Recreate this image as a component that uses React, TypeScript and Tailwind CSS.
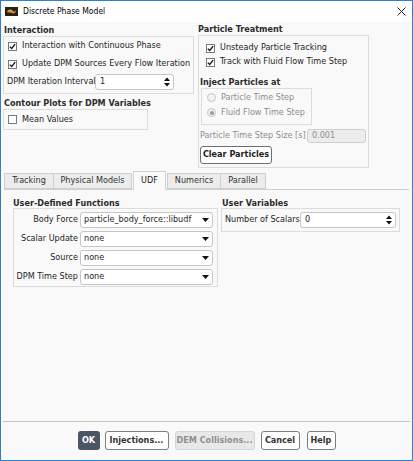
import type { ReactNode } from "react";

const font = "font-['DejaVu_Sans_Condensed','Liberation_Sans',sans-serif]";

function CheckBox({ checked }: { checked?: boolean }) {
  return (
    <span className="w-[9px] h-[9px] border border-[#7a7a7a] bg-white flex items-center justify-center shrink-0">
      {checked && (
        <svg width="7" height="7" viewBox="0 0 7 7">
          <path d="M0.8 3.6 L2.7 5.5 L6.2 1.2" stroke="#111" strokeWidth="1.3" fill="none" />
        </svg>
      )}
    </span>
  );
}

function Radio({ selected }: { selected?: boolean }) {
  return (
    <span className="w-[9px] h-[9px] rounded-full border border-[#c4c4c4] bg-[#f2f2f2] flex items-center justify-center shrink-0">
      {selected && <span className="w-[4px] h-[4px] rounded-full bg-[#9a9a9a]" />}
    </span>
  );
}

function CheckRow({ label, checked, className }: { label: string; checked?: boolean; className: string }) {
  return (
    <div className={`flex items-center gap-[5px] ${className}`}>
      <CheckBox checked={checked} />
      <span>{label}</span>
    </div>
  );
}

function Spinner({ value, className }: { value: string; className: string }) {
  return (
    <div className={`h-[16px] bg-white border border-[#c6c6c6] rounded-[3px] flex items-center pl-[4px] pr-[3px] ${className}`}>
      <span className="flex-1">{value}</span>
      <svg width="6" height="10" viewBox="0 0 6 10">
        <path d="M0 4 L3 0.6 L6 4 Z M0 6 L3 9.4 L6 6 Z" fill="#111" />
      </svg>
    </div>
  );
}

function Dropdown({ value }: { value: string }) {
  return (
    <div className="h-[16px] w-[133px] bg-white border border-[#c6c6c6] rounded-[3px] flex items-center pl-[3px] pr-[3px]">
      <span className="flex-1">{value}</span>
      <svg width="7" height="4" viewBox="0 0 7 4">
        <path d="M0 0 L7 0 L3.5 4 Z" fill="#111" />
      </svg>
    </div>
  );
}

function Header({ children, className }: { children: ReactNode; className: string }) {
  return <div className={`font-bold text-[#2b2b2b] ${className}`}>{children}</div>;
}

function Tab({ label, active, className }: { label: string; active?: boolean; className: string }) {
  return (
    <div
      className={`flex items-center justify-center border border-[#cfcfcf] ${
        active ? "h-[19px] -mb-px border-b-0 bg-[#fafafa] text-[#1a1a1a]" : "h-[16px] bg-[#ececec] text-[#333]"
      } ${className}`}
    >
      {label}
    </div>
  );
}

function UdfRow({ label, value }: { label: string; value: string }) {
  return (
    <div className="flex items-center h-[16px]">
      <span className="w-[64px] text-right whitespace-nowrap">{label}</span>
      <span className="ml-[2px]">
        <Dropdown value={value} />
      </span>
    </div>
  );
}

export default function App() {
  return (
    <div className={`w-[413px] h-[461px] border border-[#2d7fd5] bg-[#f9f9f9] flex flex-col text-[9px] text-[#1e1e1e] ${font}`}>
      {/* Title bar */}
      <div className="h-[21px] bg-white flex items-center shrink-0">
        <svg className="ml-[4px]" width="13" height="9" viewBox="0 0 13 9">
          <rect width="13" height="9" fill="#2a2116" />
          <path d="M2 5 C3 2 6 2 8 4 C9 5 10 5 11 3 C11 6 9 7 7 6 C5 5 4 6 2 5 Z" fill="#d09a35" />
        </svg>
        <span className="ml-[5px] text-[8.5px] text-black">Discrete Phase Model</span>
        <svg className="ml-auto mr-[6px]" width="9" height="9" viewBox="0 0 9 9">
          <path d="M0.5 0.5 L8.5 8.5 M8.5 0.5 L0.5 8.5" stroke="#222" strokeWidth="1" />
        </svg>
      </div>

      {/* Top groups */}
      <div className="flex pl-[2px] pt-[2px] shrink-0">
        <div className="w-[191px] flex flex-col">
          <Header className="h-[12px] leading-[12px] pl-[1px]">Interaction</Header>
          <div className="h-[58px] border border-[#dcdcdc] flex flex-col">
            <CheckRow className="h-[18px] pl-[4px]" checked label="Interaction with Continuous Phase" />
            <CheckRow className="h-[18px] pl-[4px]" checked label="Update DPM Sources Every Flow Iteration" />
            <div className="flex items-center h-[16px] mt-[1px] pl-[3px]">
              <span className="w-[88px] whitespace-nowrap">DPM Iteration Interval</span>
              <Spinner value="1" className="w-[79px]" />
            </div>
          </div>
          <Header className="h-[12px] leading-[12px] pl-[1px] mt-[3px]">Contour Plots for DPM Variables</Header>
          <div className="w-[145px] h-[21px] border border-[#dcdcdc] flex items-center">
            <CheckRow className="pl-[4px]" label="Mean Values" />
          </div>
        </div>

        <div className="w-[171px] ml-[4px] flex flex-col">
          <Header className="h-[11px] leading-[11px]">Particle Treatment</Header>
          <div className="h-[133px] border border-[#dcdcdc] flex flex-col pt-[5px]">
            <CheckRow className="h-[14px] pl-[7px]" checked label="Unsteady Particle Tracking" />
            <CheckRow className="h-[14px] pl-[7px]" checked label="Track with Fluid Flow Time Step" />
            <Header className="h-[12px] leading-[12px] mt-[7px] pl-[1px]">Inject Particles at</Header>
            <div className="ml-[2px] w-[111px] h-[37px] border border-[#dcdcdc] flex flex-col pt-[1px] text-[#8c8c8c]">
              <div className="h-[15px] flex items-center gap-[5px] pl-[5px]">
                <Radio />
                <span>Particle Time Step</span>
              </div>
              <div className="h-[15px] flex items-center gap-[5px] pl-[5px]">
                <Radio selected />
                <span>Fluid Flow Time Step</span>
              </div>
            </div>
            <div className="h-[14px] mt-[4px] flex items-center pl-[1px] text-[#8c8c8c]">
              <span className="w-[107px] whitespace-nowrap">Particle Time Step Size [s]</span>
              <div className="w-[59px] h-[14px] border border-[#cfcfcf] rounded-[3px] bg-[#ececec] flex items-center pl-[4px]">
                0.001
              </div>
            </div>
            <button className="mt-[3px] ml-[1px] w-[72px] h-[18px] border border-[#6e6e6e] rounded-[3px] bg-white font-bold text-[#222] flex items-center justify-center">
              Clear Particles
            </button>
          </div>
        </div>
      </div>

      {/* Tabs */}
      <div className="mt-[3px] mx-[3px] h-[19px] flex items-end border-b border-[#cfcfcf] shrink-0">
        <Tab label="Tracking" className="w-[50px]" />
        <Tab label="Physical Models" className="w-[79px] -ml-px" />
        <Tab label="UDF" active className="w-[33px] ml-[1px]" />
        <Tab label="Numerics" className="w-[54px] ml-[1px]" />
        <Tab label="Parallel" className="w-[46px] -ml-px" />
      </div>

      {/* UDF tab content */}
      <div className="flex-1 flex pl-[12px] pt-[8px]">
        <div className="w-[205px] flex flex-col">
          <Header className="h-[10px] leading-[10px]">User-Defined Functions</Header>
          <div className="h-[79px] border border-[#dcdcdc] flex flex-col gap-[3px] pt-[3px]">
            <UdfRow label="Body Force" value="particle_body_force::libudf" />
            <UdfRow label="Scalar Update" value="none" />
            <UdfRow label="Source" value="none" />
            <UdfRow label="DPM Time Step" value="none" />
          </div>
        </div>
        <div className="w-[179px] ml-[3px] flex flex-col">
          <Header className="h-[10px] leading-[10px] pl-[1px]">User Variables</Header>
          <div className="h-[24px] border border-[#dcdcdc] flex items-center pl-[3px]">
            <span className="w-[75px] whitespace-nowrap">Number of Scalars</span>
            <Spinner value="0" className="w-[96px]" />
          </div>
        </div>
      </div>

      {/* Footer */}
      <div className="mx-[2px] border-t border-[#c4c4c4] pt-[9px] pb-[10px] flex justify-center shrink-0 font-bold">
        <button className="w-[22px] h-[19px] rounded-[3px] bg-[#4b5563] text-white">OK</button>
        <button className="ml-[5px] w-[64px] h-[19px] rounded-[3px] border border-[#7d7d7d] bg-white text-[#333]">Injections...</button>
        <button className="ml-[6px] w-[80px] h-[19px] rounded-[3px] border border-[#d4d4d4] bg-[#e8e8e8] text-[#8f8f8f]">DEM Collisions...</button>
        <button className="ml-[6px] w-[39px] h-[19px] rounded-[3px] border border-[#7d7d7d] bg-white text-[#333]">Cancel</button>
        <button className="ml-[7px] w-[29px] h-[19px] rounded-[3px] border border-[#7d7d7d] bg-white text-[#333]">Help</button>
      </div>
    </div>
  );
}
